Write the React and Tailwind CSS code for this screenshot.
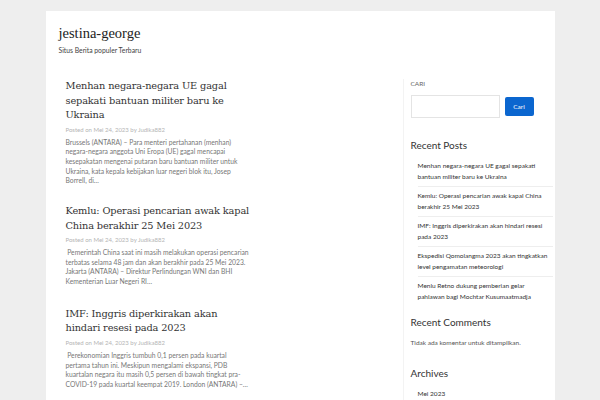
const posts = [
  {
    title: "Menhan negara-negara UE gagal sepakati bantuan militer baru ke Ukraina",
    excerpt:
      "Brussels (ANTARA) – Para menteri pertahanan (menhan) negara-negara anggota Uni Eropa (UE) gagal mencapai kesepakatan mengenai putaran baru bantuan militer untuk Ukraina, kata kepala kebijakan luar negeri blok itu, Josep Borrell, di…",
  },
  {
    title: "Kemlu: Operasi pencarian awak kapal China berakhir 25 Mei 2023",
    excerpt:
      "\u00a0Pemerintah China saat ini masih melakukan operasi pencarian terbatas selama 48 jam dan akan berakhir pada 25 Mei 2023. Jakarta (ANTARA) – Direktur Perlindungan WNI dan BHI Kementerian Luar Negeri RI…",
  },
  {
    title: "IMF: Inggris diperkirakan akan hindari resesi pada 2023",
    excerpt:
      "\u00a0Perekonomian Inggris tumbuh 0,1 persen pada kuartal pertama tahun ini. Meskipun mengalami ekspansi, PDB kuartalan negara itu masih 0,5 persen di bawah tingkat pra-COVID-19 pada kuartal keempat 2019. London (ANTARA) –…",
  },
];

const recent = [
  "Menhan negara-negara UE gagal sepakati bantuan militer baru ke Ukraina",
  "Kemlu: Operasi pencarian awak kapal China berakhir 25 Mei 2023",
  "IMF: Inggris diperkirakan akan hindari resesi pada 2023",
  "Ekspedisi Qomolangma 2023 akan tingkatkan level pengamatan meteorologi",
  "Menlu Retno dukung pemberian gelar pahlawan bagi Mochtar Kusumaatmadja",
];

const lato = "font-['Lato','Liberation_Sans',sans-serif]";
const serif = "font-['DejaVu_Serif','Liberation_Serif',serif]";

export default function App() {
  return (
    <div className="h-[400px] bg-[#eeeeee] pt-[11px] overflow-hidden">
      <div className="mx-auto w-[509px] bg-white min-h-[400px]">
        <header className="pl-[13px] pt-[12px] h-[68px]">
          <h1 className="font-['Liberation_Serif',serif] text-[14.5px] leading-[20px] text-[#222]">
            jestina-george
          </h1>
          <p className={`${lato} text-[6.8px] leading-[10px] mt-[2px] text-[#444]`}>
            Situs Berita populer Terbaru
          </p>
        </header>

        <div className="flex">
          <main className="ml-[20px] w-[185px]">
            {posts.map((p) => (
              <article key={p.title} className="mb-[20px] first:mb-[18px]">
                <h2 className={`${serif} text-[9.8px] leading-[14.5px] tracking-[-0.15px] text-[#333]`}>
                  {p.title}
                </h2>
                <div className={`${lato} text-[6px] leading-[11px] mt-[1px] text-[#b5b5b5]`}>
                  Posted on Mei 24, 2023 by Judika882
                </div>
                <p className={`${lato} text-[6.75px] leading-[9.7px] mt-[3px] text-[#777]`}>
                  {p.excerpt}
                </p>
              </article>
            ))}
          </main>

          <aside className={`${lato} ml-auto w-[152px] border-l border-[#f3f3f3] pl-[7px] pr-[2px]`}>
            <div className="text-[6.5px] leading-[10px] text-[#666] uppercase">Cari</div>
            <div className="flex items-center mt-[6px]">
              <div className="w-[89px] h-[23px] border border-[#e4e4e4]" />
              <button className="ml-[5px] w-[29px] h-[19px] bg-[#0b66cf] text-white text-[6.5px] rounded-[2px]">
                Cari
              </button>
            </div>

            <h3 className="text-[10px] leading-[14px] text-[#333] mt-[20px]">Recent Posts</h3>
            <ul className="mt-[8px] pl-[7px]">
              {recent.map((r) => (
                <li
                  key={r}
                  className="text-[6.5px] leading-[11px] text-[#333] pb-[4px] mb-[3px] border-b border-[#eeeeee] last:border-b-0"
                >
                  {r}
                </li>
              ))}
            </ul>

            <h3 className="text-[10px] leading-[14px] text-[#333] mt-[9px]">Recent Comments</h3>
            <p className="text-[6.5px] leading-[10px] text-[#555] mt-[9px]">
              Tidak ada komentar untuk ditampilkan.
            </p>

            <h3 className="text-[10px] leading-[14px] text-[#333] mt-[18px]">Archives</h3>
            <ul className="mt-[8px] pl-[7px]">
              <li className="text-[6.5px] leading-[11px] text-[#333]">Mei 2023</li>
            </ul>
          </aside>
        </div>
      </div>
    </div>
  );
}
